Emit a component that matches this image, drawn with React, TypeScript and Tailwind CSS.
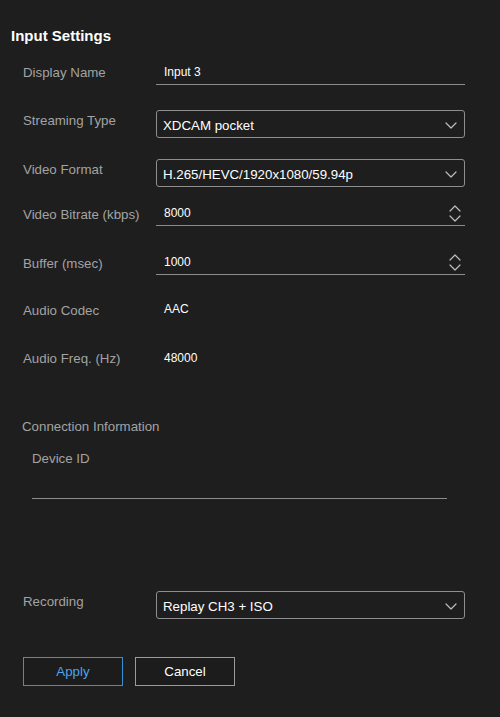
import React from "react";

const labelCls = "w-[133px] shrink-0 text-[13.3px] leading-[16px] text-[#a3a3a3]";

function Chevron({ up = false }: { up?: boolean }) {
  return (
    <svg width="12" height="7" viewBox="0 0 12 7" fill="none">
      <polyline
        points={up ? "1,6 6,1 11,6" : "1,1 6,6 11,1"}
        stroke="#bdbdbd"
        strokeWidth="1.2"
        strokeLinecap="round"
        strokeLinejoin="round"
      />
    </svg>
  );
}

function TextRow({ label, value, height, spinner }: { label: string; value: string; height: string; spinner?: boolean }) {
  return (
    <div className={`flex ${height}`}>
      <div className={`${labelCls} pt-[19px]`}>{label}</div>
      <div className="flex-1 mt-[13px] h-[25px] border-b border-[#8c8c8c] flex items-center justify-between pl-[8px] pr-[4px]">
        <span className="text-[12px] leading-[24px] text-white">{value}</span>
        {spinner && (
          <div className="flex flex-col gap-[3px]">
            <Chevron up />
            <Chevron />
          </div>
        )}
      </div>
    </div>
  );
}

function SelectRow({ label, value, height }: { label: string; value: string; height: string }) {
  return (
    <div className={`flex ${height}`}>
      <div className={`${labelCls} pt-[19px]`}>{label}</div>
      <div className="flex-1 mt-[16px] h-[28px] rounded-[3px] border border-[#8e8e8e] flex items-center justify-between pl-[6px] pr-[7px]">
        <span className="pt-[3px] text-[13.3px] leading-[18px] text-white">{value}</span>
        <div className="mt-[3px]">
          <Chevron />
        </div>
      </div>
    </div>
  );
}

function InfoRow({ label, value, height, offset }: { label: string; value: string; height: string; offset: string }) {
  return (
    <div className={`flex ${height}`}>
      <div className={`${labelCls} pt-[19px]`}>{label}</div>
      <div className={`${offset} pl-[8px] text-[12px] leading-[16px] text-white`}>{value}</div>
    </div>
  );
}

export default function App() {
  return (
    <div className="w-[500px] h-[717px] bg-[#1e1e1e] font-['Liberation_Sans',Arial,sans-serif]">
      <div className="pt-[26px] pl-[11px] text-[15px] leading-[20px] font-bold text-white">
        Input Settings
      </div>

      <div className="pl-[23px] pr-[35px]">
        <div className="flex h-[48px]">
          <div className={`${labelCls} pt-[19px]`}>Display Name</div>
          <div className="flex-1 mt-[14px] h-[25px] border-b border-[#8c8c8c] flex items-center pl-[8px]">
            <span className="text-[12px] leading-[24px] text-white">Input 3</span>
          </div>
        </div>
        <SelectRow label="Streaming Type" value="XDCAM pocket" height="h-[49px]" />
        <SelectRow label="Video Format" value="H.265/HEVC/1920x1080/59.94p" height="h-[45px]" />
        <TextRow label="Video Bitrate (kbps)" value="8000" height="h-[49px]" spinner />
        <TextRow label="Buffer (msec)" value="1000" height="h-[47px]" spinner />
        <InfoRow label="Audio Codec" value="AAC" height="h-[48px]" offset="mt-[17px]" />
        <InfoRow label="Audio Freq. (Hz)" value="48000" height="h-[48px]" offset="mt-[18px]" />
      </div>

      {/* Connection Information */}
      <div className="mt-[39px] pl-[22px] text-[13.3px] leading-[16px] text-[#a3a3a3]">
        Connection Information
      </div>
      <div className="mt-[16px] pl-[32px] text-[13.3px] leading-[16px] text-[#a3a3a3]">Device ID</div>
      <div className="mt-[31px] ml-[32px] w-[415px] border-b border-[#8c8c8c]" />

      <div className="mt-[76px] pl-[23px] pr-[35px]">
        <SelectRow label="Recording" value="Replay CH3 + ISO" height="h-[48px]" />
      </div>

      <div className="mt-[34px] pl-[23px] flex gap-[12px]">
        <button className="w-[100px] h-[29px] border border-[#3b8fd8] text-[#4aa3f0] text-[13.3px] bg-[#1c1c1c]">
          Apply
        </button>
        <button className="w-[100px] h-[29px] border border-[#9a9a9a] text-white text-[13.3px] bg-[#1c1c1c]">
          Cancel
        </button>
      </div>
    </div>
  );
}
